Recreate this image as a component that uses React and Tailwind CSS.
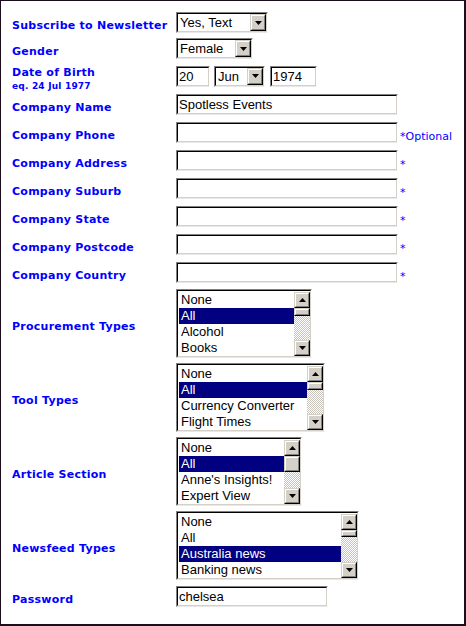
import React from "react";

const LABEL =
  "w-[164px] shrink-0 pt-[6px] font-['DejaVu_Sans',Verdana,sans-serif] font-bold text-[11px] leading-[13px] tracking-[0.25px] text-[#0000ff]";

function Sunken({ className = "", children }) {
  return (
    <div
      className={`box-border border border-t-[#808080] border-l-[#808080] border-r-white border-b-[#e8e8e8] ${className}`}
    >
      <div className="box-border h-full w-full border border-t-black border-l-black border-r-[#d4d0c8] border-b-[#d4d0c8] bg-white overflow-hidden">
        {children}
      </div>
    </div>
  );
}

function Raised({ className = "", children }) {
  return (
    <div
      className={`box-border border border-t-[#d4d0c8] border-l-[#d4d0c8] border-r-black border-b-black ${className}`}
    >
      <div className="box-border h-full w-full border border-t-white border-l-white border-r-[#808080] border-b-[#808080] bg-[#d4d0c8] flex items-center justify-center">
        {children}
      </div>
    </div>
  );
}

function Down() {
  return (
    <svg width="7" height="4" viewBox="0 0 7 4">
      <path d="M0 0h7L3.5 4z" fill="#000" />
    </svg>
  );
}
function Up() {
  return (
    <svg width="7" height="4" viewBox="0 0 7 4">
      <path d="M0 4h7L3.5 0z" fill="#000" />
    </svg>
  );
}

const FIELD = "font-['Liberation_Sans',Arial,sans-serif] text-[13px] text-black";

function TextInput({ w, value = "" }) {
  return (
    <Sunken className={`${w} h-[21px]`}>
      <div className={`${FIELD} pl-[1px] leading-[18px] whitespace-nowrap`}>{value}</div>
    </Sunken>
  );
}

function Select({ w, value }) {
  return (
    <Sunken className={`${w} h-[21px]`}>
      <div className="flex h-full">
        <div className={`${FIELD} flex-1 pl-[2px] leading-[17px] whitespace-nowrap`}>{value}</div>
        <Raised className="w-[16px] h-[17px]">
          <Down />
        </Raised>
      </div>
    </Sunken>
  );
}

function ListBox({ w, items, selected, thumb = "h-[8px]" }) {
  return (
    <Sunken className={`${w} h-[69px]`}>
      <div className="flex h-full pt-[1px]">
        <div className="flex-1 pl-[1px]">
          {items.map((it, i) => (
            <div
              key={it}
              className={`${FIELD} h-[16px] leading-[16px] pl-[2px] whitespace-nowrap ${
                i === selected ? "bg-[#000080] text-white" : ""
              }`}
            >
              {it}
            </div>
          ))}
        </div>
        <div className="w-[16px] h-[64px] flex flex-col">
          <Raised className="w-[16px] h-[16px] shrink-0">
            <Up />
          </Raised>
          <Raised className={`w-[16px] ${thumb} shrink-0`} />
          <div className="flex-1 bg-[repeating-conic-gradient(#c8c4bc_0_25%,#ffffff_0_50%)] bg-[length:2px_2px]" />
          <Raised className="w-[16px] h-[16px] shrink-0">
            <Down />
          </Raised>
        </div>
      </div>
    </Sunken>
  );
}

function Req({ text = "*" }) {
  return (
    <span className="ml-[2px] mb-[1px] font-['DejaVu_Sans',Verdana,sans-serif] text-[11px] leading-none text-[#0000ff]">
      {text}
    </span>
  );
}

function CompanyRow({ label, req = "*", value = "" }) {
  return (
    <div className="flex items-center h-[21px] mt-[7px]">
      <div className={LABEL}>{label}</div>
      <div className="flex items-end h-[21px]">
        <TextInput w="w-[222px]" value={value} />
        {req && <Req text={req} />}
      </div>
    </div>
  );
}

export default function App() {
  return (
    <div className="box-border w-[466px] h-[626px] bg-white border-l border-t border-r-2 border-b-2 border-[#1c0c1c] pl-[11px] pt-[11px]">
      <div className="flex items-center h-[21px]">
        <div className={LABEL}>Subscribe to Newsletter</div>
        <Select w="w-[92px]" value="Yes, Text" />
      </div>
      <div className="flex items-center h-[21px] mt-[5px]">
        <div className={LABEL}>Gender</div>
        <Select w="w-[77px]" value="Female" />
      </div>
      <div className="flex items-center h-[26px] mt-[4px]">
        <div className={LABEL}>
          <div className="leading-[12px]">Date of Birth</div>
          <div className="text-[9px] leading-[11px] mt-[2px] tracking-[0.2px]">eq. 24 Jul 1977</div>
        </div>
        <div className="flex items-center">
          <TextInput w="w-[34px]" value="20" />
          <div className="ml-[4px]">
            <Select w="w-[51px]" value="Jun" />
          </div>
          <div className="ml-[5px]">
            <TextInput w="w-[47px]" value="1974" />
          </div>
        </div>
      </div>
      <div className="flex items-center h-[21px] mt-[5px]">
        <div className={LABEL}>Company Name</div>
        <TextInput w="w-[222px]" value="Spotless Events" />
      </div>
      <CompanyRow label="Company Phone" req="*Optional" />
      <CompanyRow label="Company Address" />
      <CompanyRow label="Company Suburb" />
      <CompanyRow label="Company State" />
      <CompanyRow label="Company Postcode" />
      <CompanyRow label="Company Country" />
      <div className="flex items-center mt-[6px]">
        <div className={LABEL}>Procurement Types</div>
        <ListBox w="w-[136px]" items={["None", "All", "Alcohol", "Books"]} selected={1} />
      </div>
      <div className="flex items-center mt-[5px]">
        <div className={LABEL}>Tool Types</div>
        <ListBox
          w="w-[149px]"
          items={["None", "All", "Currency Converter", "Flight Times"]}
          selected={1}
        />
      </div>
      <div className="flex items-center mt-[5px]">
        <div className={LABEL}>Article Section</div>
        <ListBox
          w="w-[126px]"
          items={["None", "All", "Anne's Insights!", "Expert View"]}
          selected={1}
          thumb="h-[16px]"
        />
      </div>
      <div className="flex items-center mt-[5px]">
        <div className={LABEL}>Newsfeed Types</div>
        <ListBox
          w="w-[183px]"
          items={["None", "All", "Australia news", "Banking news"]}
          selected={2}
          thumb="h-[7px]"
        />
      </div>
      <div className="flex items-center h-[21px] mt-[6px]">
        <div className={LABEL}>Password</div>
        <TextInput w="w-[152px]" value="chelsea" />
      </div>
    </div>
  );
}
